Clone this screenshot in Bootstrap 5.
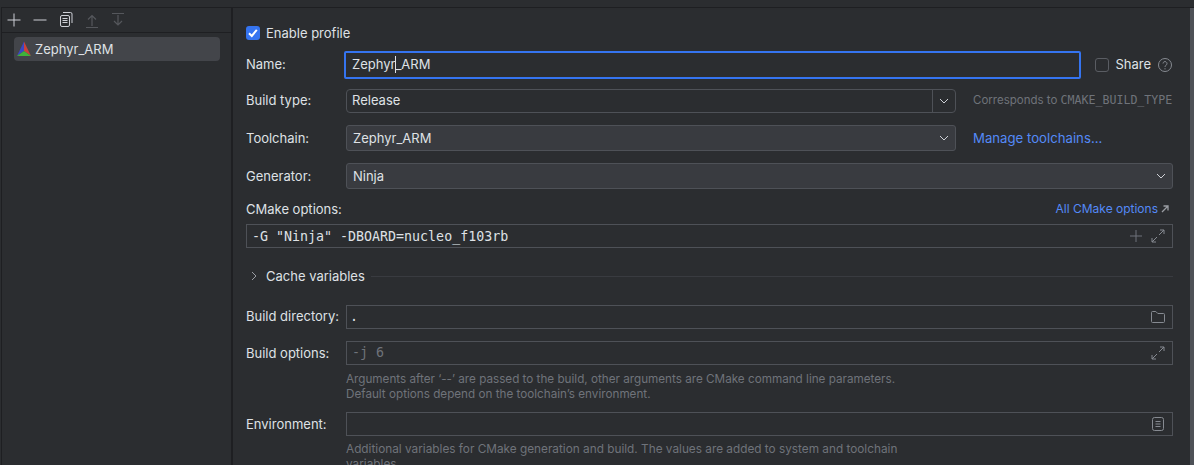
<!doctype html>
<html lang="en"><head><meta charset="utf-8"><title>CMake profiles</title>
<link rel="stylesheet" href="https://cdn.jsdelivr.net/npm/bootstrap@5.3.0/dist/css/bootstrap.min.css">
<style>
html,body{height:465px;overflow:hidden;background:#2b2d30;}
body{font-family:Inter,"Noto Sans",sans-serif;font-size:13px;line-height:16px;color:#dfe1e5;}
svg{display:block;flex:none;}
.ide-frame{height:458px;margin-top:7px;border-top:1px solid #1e1f22;border-left:1px solid #1e1f22;margin-left:1px;overflow:hidden;}
.ide-side{width:231px;flex:none;border-right:2px solid #1e1f22;height:100%;}
.ide-tools{height:24px;border-bottom:1px solid #1e1f22;padding-left:2px;gap:6px;box-sizing:content-box;}
.ide-tools svg{width:20px;height:20px;}
.ide-item{margin:4px 11px 0 12px;height:24px;border-radius:4px;background:#43454a;padding-left:2px;gap:3px;}
.ide-main{flex:1 1 auto;min-width:0;padding:0 21px 0 13px;position:relative;}
.ide-scroll{position:absolute;right:0;top:-1px;width:4px;height:480px;background:#4e5157;}
.ide-row{display:flex;align-items:center;}
.ide-label{width:100px;flex:none;}
.ide-raise{padding-bottom:2px;}
.ide-field{flex:1 1 auto;min-width:0;height:24px;border:1px solid #4e5157;display:flex;align-items:center;padding:0 7px 0 5px;background:#2b2d30;}
.ide-folderbox{padding-right:6px;}
.ide-mono{font-family:"DejaVu Sans Mono","Liberation Mono",monospace;font-size:13.3px;}
.ide-dot{margin-left:-2px;}
.ide-filled{background:#393b40;border-radius:3px;height:26px;padding:0 5px 0 6px;}
.ide-muted{color:#6f737a;}
.ide-link{color:#548af7;text-decoration:none;}
.r-enable{height:18px;margin-top:16px;}
.r-name{height:28px;margin-top:9px;}
.r-type{height:24px;margin-top:10px;}
.r-chain{height:26px;margin-top:12px;}
.r-gen{height:26px;margin-top:12px;}
.r-optlabel{height:18px;margin-top:11px;}
.r-opts{height:24px;margin-top:6px;}
.r-cache{height:18px;margin-top:19px;}
.r-dir{height:24px;margin-top:20px;}
.r-bopts{height:24px;margin-top:12px;}
.r-env{height:24px;margin-top:10px;}
.ide-check{width:14px;height:14px;border-radius:3px;flex:none;}
.ide-check-on{background:#3574f0;}
.ide-check-off{border:1px solid #5a5d63;background:#2b2d30;}
.ide-focus{flex:none;width:737px;margin-left:-2px;height:28px;border:2px solid #3574f0;border-radius:2px;padding-left:6px;padding-bottom:2px;background:#2b2d30;display:flex;align-items:center;}
.ide-caret{display:inline-block;width:1px;height:17px;background:#dfe1e5;margin:0 -1px 0 0;vertical-align:-4px;}
.ide-fill{flex:1 1 auto;}
.ide-typebox{width:610px;flex:none;padding-right:0;}
.ide-arrowcell{width:23px;height:100%;border-left:1px solid #4e5157;margin-left:auto;flex:none;display:flex;align-items:center;justify-content:center;}
.ide-chainbox{width:610px;flex:none;}
.ide-hint{font-size:11.5px;margin-left:17px;white-space:nowrap;}
.ide-hint .ide-mono{font-size:11.6px;}
.ide-toollink{font-size:13.2px;margin-left:17px;}
.ide-alllink{font-size:12px;}
.ide-extarrow{margin:0 4px 0 3px;}
.ide-rule{height:1px;background:#393b40;margin-left:6px;}
.ide-help{margin:6px 0 0 100px;font-size:11.8px;line-height:15px;width:556px;}
.ide-help-one{white-space:nowrap;font-size:11.7px;margin-top:7px;}
.ide-checkgap{margin-left:6px;}
.ide-sharegap{margin-left:6px;}
.ide-helpgap{margin-left:6px;}
.ide-optstext{padding-top:2px;}
</style></head>
<body>
<div class="ide-frame d-flex">
  <div class="ide-side">
    <div class="ide-tools d-flex align-items-center">
      <svg viewBox="0 0 20 20" fill="none" stroke="#ced0d6" stroke-width="1"><path d="M10 3.5v13M3.5 10h13"/></svg>
      <svg viewBox="0 0 20 20" fill="none" stroke="#ced0d6" stroke-width="1"><path d="M3.5 10h13"/></svg>
      <svg viewBox="0 0 20 20" fill="none" stroke="#ced0d6" stroke-width="1"><rect x="4.5" y="5.5" width="9" height="11" rx="1.5"/><path d="M7 2.5h7.5a1.5 1.5 0 0 1 1.5 1.5v9M6.5 8.5h5M6.5 10.5h5M6.5 12.5h5"/></svg>
      <svg viewBox="0 0 20 20" fill="none" stroke="#55575c" stroke-width="1.2"><path d="M10 16V6M6 9.5L10 5.5l4 4M4 17.5h12"/></svg>
      <svg viewBox="0 0 20 20" fill="none" stroke="#55575c" stroke-width="1.2"><path d="M4 3.5h12M10 5v10M6 11l4 4 4-4"/></svg>
    </div>
    <div class="ide-item d-flex align-items-center">
      <svg width="16" height="16" viewBox="0 0 16 16"><path d="M8 0.5L1 15l7-5z" fill="#3b47c4"/><path d="M8 0.5L15 15l-7-5z" fill="#c9413c"/><path d="M1 15h14l-7-5z" fill="#3fb23a"/></svg>
      <span>Zephyr_ARM</span>
    </div>
  </div>
  <div class="ide-main">
    <div class="ide-scroll"></div>
    <div class="ide-row r-enable">
      <span class="ide-check ide-check-on d-flex align-items-center justify-content-center"><svg width="14" height="14" viewBox="0 0 14 14" fill="none" stroke="#fff" stroke-width="2"><path d="M3 7.2l2.8 2.8L10.8 3.8"/></svg></span>
      <span class="ide-checkgap">Enable profile</span>
    </div>
    <div class="ide-row r-name">
      <div class="ide-label ide-raise">Name:</div>
      <div class="ide-focus"><span>Zephyr<span class="ide-caret"></span>_ARM</span></div>
      <span class="ide-check ide-check-off ms-auto"></span>
      <span class="ide-sharegap ide-raise">Share</span>
      <svg class="ide-helpgap" width="16" height="16" viewBox="0 0 16 16" fill="none" stroke="#868a91"><circle cx="8" cy="8" r="6.5"/><path d="M6 6.5a2 2 0 1 1 3 1.8c-.7.4-1 .8-1 1.6" /><path d="M8 11.2v1.2"/></svg>
    </div>
    <div class="ide-row r-type">
      <div class="ide-label ide-raise">Build type:</div>
      <div class="ide-field ide-typebox rounded-1"><span class="ide-raise">Release</span>
        <span class="ide-arrowcell"><svg width="12" height="12" viewBox="0 0 12 12" fill="none" stroke="#ced0d6"><path d="M2 4l4 4 4-4"/></svg></span></div>
      <div class="ide-hint ide-muted ide-raise">Corresponds to <span class="ide-mono">CMAKE_BUILD_TYPE</span></div>
    </div>
    <div class="ide-row r-chain">
      <div class="ide-label">Toolchain:</div>
      <div class="ide-field ide-filled ide-chainbox"><span>Zephyr_ARM</span><svg class="ms-auto" width="12" height="12" viewBox="0 0 12 12" fill="none" stroke="#ced0d6"><path d="M2 4l4 4 4-4"/></svg></div>
      <a class="ide-link ide-toollink" href="#">Manage toolchains...</a>
    </div>
    <div class="ide-row r-gen">
      <div class="ide-label">Generator:</div>
      <div class="ide-field ide-filled"><span>Ninja</span><svg class="ms-auto" width="12" height="12" viewBox="0 0 12 12" fill="none" stroke="#ced0d6"><path d="M2 4l4 4 4-4"/></svg></div>
    </div>
    <div class="ide-row r-optlabel">
      <span>CMake options:</span>
      <a class="ide-link ide-alllink ms-auto" href="#">All CMake options</a>
      <svg class="ide-extarrow" width="8" height="8" viewBox="0 0 8 8" fill="none" stroke="#9a9da3" stroke-width="1.3"><path d="M1 7L7 1M2.5 1H7v4.5"/></svg>
    </div>
    <div class="ide-row r-opts">
      <div class="ide-field">
        <span class="ide-mono ide-optstext">-G "Ninja" -DBOARD=nucleo_f103rb</span>
        <svg class="ms-auto" width="14" height="14" viewBox="0 0 14 14" fill="none" stroke="#6f737a"><path d="M7 1v12M1 7h12"/></svg>
        <svg class="ms-2" width="14" height="14" viewBox="0 0 14 14" fill="none" stroke="#868a91"><path d="M8 6l5-5M9 1h4v4M6 8l-5 5M1 9v4h4"/></svg>
      </div>
    </div>
    <div class="ide-row r-cache">
      <svg class="ms-1" width="8" height="10" viewBox="0 0 8 10" fill="none" stroke="#9a9da3"><path d="M2 1l4 4-4 4"/></svg>
      <span class="ms-2">Cache variables</span>
      <div class="ide-rule ide-fill"></div>
    </div>
    <div class="ide-row r-dir">
      <div class="ide-label ide-raise">Build directory:</div>
      <div class="ide-field ide-folderbox"><span class="ide-mono ide-dot">.</span>
        <svg class="ms-auto" width="16" height="16" viewBox="0 0 16 16" fill="none" stroke="#868a91"><path d="M1.5 3.5a1 1 0 0 1 1-1h3.3l2 2h5.7a1 1 0 0 1 1 1v7a1 1 0 0 1-1 1h-11a1 1 0 0 1-1-1z"/></svg></div>
    </div>
    <div class="ide-row r-bopts">
      <div class="ide-label">Build options:</div>
      <div class="ide-field"><span class="ide-mono ide-muted">-j 6</span>
        <svg class="ms-auto" width="14" height="14" viewBox="0 0 14 14" fill="none" stroke="#868a91"><path d="M8 6l5-5M9 1h4v4M6 8l-5 5M1 9v4h4"/></svg></div>
    </div>
    <div class="ide-help ide-help-one ide-muted">Arguments after ‘--’ are passed to the build, other arguments are CMake command line parameters.<br>Default options depend on the toolchain’s environment.</div>
    <div class="ide-row r-env">
      <div class="ide-label">Environment:</div>
      <div class="ide-field"><svg class="ms-auto" width="14" height="14" viewBox="0 0 14 14" fill="none" stroke="#868a91"><rect x="1.5" y="0.5" width="11" height="13" rx="2"/><path d="M4.5 4.5h5M4.5 7h5M4.5 9.5h5"/></svg></div>
    </div>
    <div class="ide-help ide-muted">Additional variables for CMake generation and build. The values are added to system and toolchain variables.</div>
  </div>
</div>
<script src="https://cdn.jsdelivr.net/npm/bootstrap@5.3.0/dist/js/bootstrap.bundle.min.js"></script>
</body></html>
